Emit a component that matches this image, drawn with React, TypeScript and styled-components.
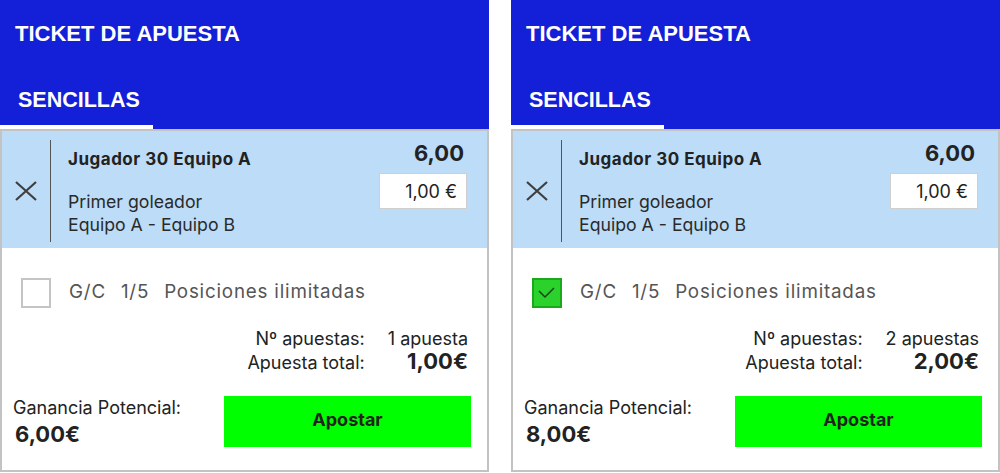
import React from "react";
import styled, { createGlobalStyle } from "styled-components";

const GlobalStyle = createGlobalStyle`
  * {
    box-sizing: border-box;
  }
  body {
    margin: 0;
    background: #fff;
    font-family: Inter, "Noto Sans", sans-serif;
    color: #222;
  }
`;

const Page = styled.div`
  display: flex;
  gap: 22px;
  width: 1000px;
`;

const Ticket = styled.section`
  width: 489px;
  display: flex;
  flex-direction: column;
`;

const Header = styled.header`
  height: 129px;
  background: #1420d8;
  display: flex;
  flex-direction: column;
`;

const Title = styled.h1`
  margin: 0;
  height: 67px;
  padding-left: 15px;
  display: flex;
  align-items: center;
  font: 700 22px/1 "Liberation Sans", Arial, sans-serif;
  color: #fff;
`;

const Tabs = styled.nav`
  display: flex;
  flex: 1;
  align-items: flex-end;
`;

const Tab = styled.div<{ $active?: boolean }>`
  width: 153px;
  padding: 21px 0 12px 18px;
  font: 700 21.5px/25px "Liberation Sans", Arial, sans-serif;
  color: #fff;
  border-bottom: 4px solid ${({ $active }) => ($active ? "#fff" : "transparent")};
`;

const Body = styled.div`
  height: 343px;
  border: 2px solid #c3c3c3;
  display: flex;
  flex-direction: column;
`;

const BetRow = styled.div`
  height: 117px;
  display: flex;
  background: #bcdcf8;
`;

const CloseButton = styled.button`
  width: 48px;
  padding: 3px 0 0;
  border: 0;
  background: none;
  display: flex;
  align-items: center;
  justify-content: center;
  cursor: pointer;
  color: #3f3f3f;
`;

const Divider = styled.div`
  width: 1px;
  margin: 9px 0 6px;
  background: #555;
`;

const BetInfo = styled.div`
  flex: 1;
  padding: 18px 0 0 17px;
  display: flex;
  flex-direction: column;
`;

const Selection = styled.div`
  font-size: 17px;
  line-height: 20px;
  font-weight: 700;
  letter-spacing: 0.5px;
  color: #222;
`;

const Market = styled.div`
  margin-top: 22px;
  font-size: 17.7px;
  line-height: 22.5px;
  color: #2a2a2a;
`;

const StakeColumn = styled.div`
  padding: 10px 20px 0 0;
  display: flex;
  flex-direction: column;
  align-items: flex-end;
`;

const Odds = styled.div`
  padding-right: 3px;
  font-size: 22px;
  line-height: 25px;
  font-weight: 700;
  color: #222;
`;

const StakeInput = styled.input`
  width: 88px;
  height: 36px;
  margin-top: 7px;
  padding: 0 9px 0 0;
  border: 1px solid #cfcfcf;
  background: #fff;
  text-align: right;
  font: 400 18px Inter, "Noto Sans", sans-serif;
  color: #222;
  outline: none;
`;

const Options = styled.div`
  padding: 30px 0 0 19px;
  display: flex;
  align-items: center;
  height: 60px;
`;

const Check = styled.span<{ $checked?: boolean }>`
  width: 30px;
  height: 30px;
  border: 2px solid ${({ $checked }) => ($checked ? "#1ba81b" : "#c4c4c4")};
  background: ${({ $checked }) => ($checked ? "#2bd22b" : "#fff")};
  display: flex;
  align-items: center;
  justify-content: center;
`;

const OptionText = styled.div`
  margin-left: 18px;
  margin-top: -3px;
  display: flex;
  gap: 15px;
  font-size: 18.8px;
  letter-spacing: 0.8px;
  color: #555;
`;

const Summary = styled.div`
  margin-top: 19px;
  padding-right: 19px;
  display: grid;
  grid-template-columns: auto auto;
  justify-content: end;
  column-gap: 23px;
  align-items: baseline;
`;

const SummaryLabel = styled.span`
  font-size: 18px;
  line-height: 23px;
  text-align: right;
  color: #222;
`;

const SummaryValue = styled.span<{ $strong?: boolean }>`
  font-size: ${({ $strong }) => ($strong ? "22px" : "18px")};
  font-weight: ${({ $strong }) => ($strong ? 700 : 400)};
  line-height: 23px;
  text-align: right;
  color: #222;
`;

const Footer = styled.div`
  margin-top: 22px;
  padding: 0 16px 0 11px;
  display: flex;
  justify-content: space-between;
  align-items: flex-start;
`;

const Gain = styled.div`
  display: flex;
  flex-direction: column;
`;

const GainLabel = styled.span`
  font-size: 18px;
  line-height: 23px;
  color: #222;
`;

const GainValue = styled.span`
  margin-top: 3px;
  padding-left: 2px;
  font-size: 22px;
  line-height: 25px;
  font-weight: 700;
  color: #222;
`;

const BetButton = styled.button`
  width: 247px;
  height: 51px;
  padding: 0 0 4px;
  border: 0;
  background: #00ff00;
  font: 700 18px Inter, "Noto Sans", sans-serif;
  color: #222;
  cursor: pointer;
`;

const CloseIcon = () => (
  <svg width="22" height="20" viewBox="0 0 22 20">
    <path d="M1 1 L21 19 M21 1 L1 19" stroke="currentColor" strokeWidth="2.2" fill="none" />
  </svg>
);

const Tick = () => (
  <svg width="26" height="26" viewBox="0 0 26 26">
    <path d="M5 11 L11 17 L20 8" stroke="#1c3f1c" strokeWidth="1.5" fill="none" />
  </svg>
);

interface TicketData {
  checked: boolean;
  bets: string;
  total: string;
  gain: string;
}

const tickets: TicketData[] = [
  { checked: false, bets: "1 apuesta", total: "1,00€", gain: "6,00€" },
  { checked: true, bets: "2 apuestas", total: "2,00€", gain: "8,00€" },
];

function BetTicket({ checked, bets, total, gain }: TicketData) {
  return (
    <Ticket>
      <Header>
        <Title>TICKET DE APUESTA</Title>
        <Tabs>
          <Tab $active>SENCILLAS</Tab>
        </Tabs>
      </Header>
      <Body>
        <BetRow>
          <CloseButton aria-label="Eliminar">
            <CloseIcon />
          </CloseButton>
          <Divider />
          <BetInfo>
            <Selection>Jugador 30 Equipo A</Selection>
            <Market>
              Primer goleador
              <br />
              Equipo A - Equipo B
            </Market>
          </BetInfo>
          <StakeColumn>
            <Odds>6,00</Odds>
            <StakeInput readOnly value="1,00 €" />
          </StakeColumn>
        </BetRow>
        <Options>
          <Check $checked={checked}>{checked && <Tick />}</Check>
          <OptionText>
            <span>G/C</span>
            <span>1/5</span>
            <span>Posiciones ilimitadas</span>
          </OptionText>
        </Options>
        <Summary>
          <SummaryLabel>Nº apuestas:</SummaryLabel>
          <SummaryValue>{bets}</SummaryValue>
          <SummaryLabel>Apuesta total:</SummaryLabel>
          <SummaryValue $strong>{total}</SummaryValue>
        </Summary>
        <Footer>
          <Gain>
            <GainLabel>Ganancia Potencial:</GainLabel>
            <GainValue>{gain}</GainValue>
          </Gain>
          <BetButton>Apostar</BetButton>
        </Footer>
      </Body>
    </Ticket>
  );
}

export default function App() {
  return (
    <>
      <GlobalStyle />
      <Page>
        {tickets.map((t, i) => (
          <BetTicket key={i} {...t} />
        ))}
      </Page>
    </>
  );
}
